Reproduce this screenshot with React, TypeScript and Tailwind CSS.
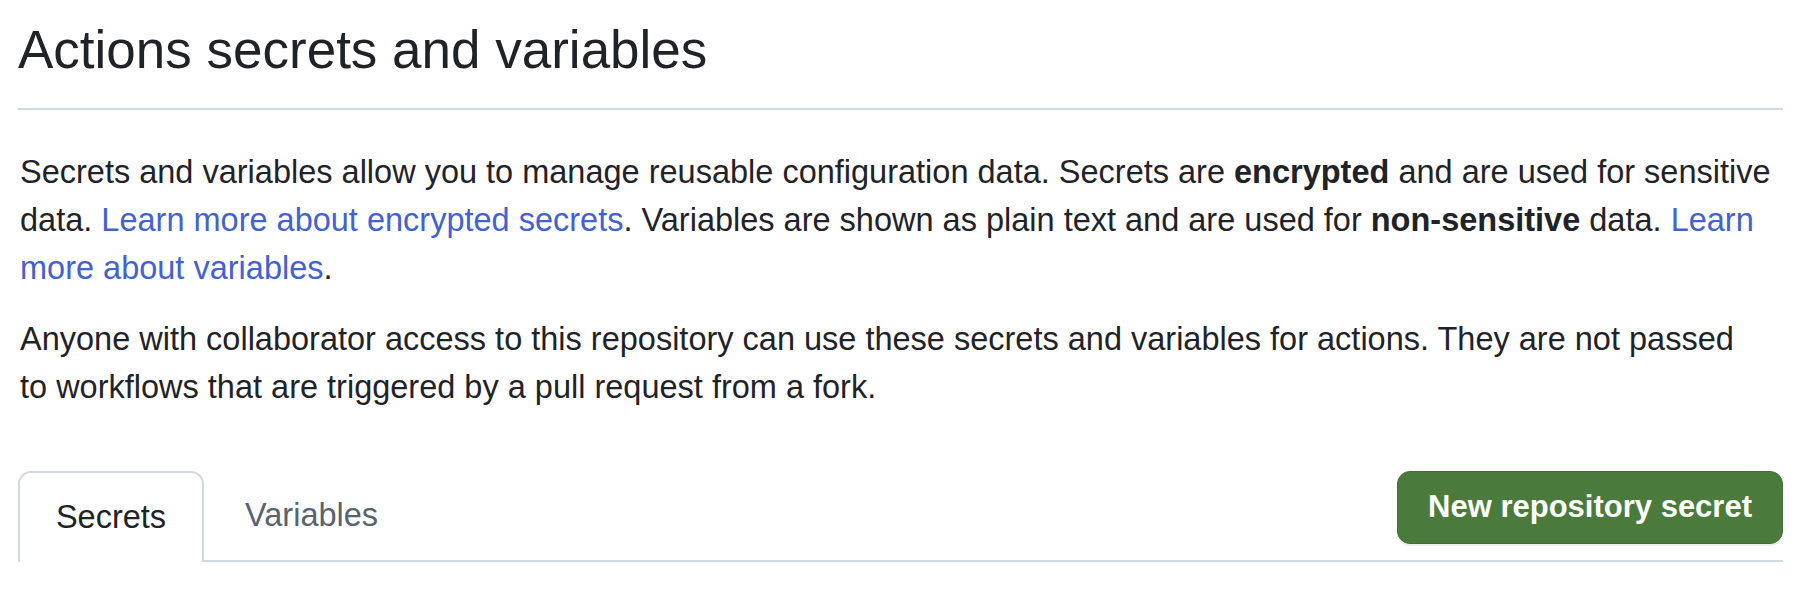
export default function App() {
  const font = { fontFamily: '"Liberation Sans", Arial, sans-serif' };
  return (
    <div className="min-h-screen w-full bg-white pl-[18px] pr-[21px] text-[#1f2328]" style={font}>
      <div className="border-b-2 border-[#d1d9e0] pt-[17px] pb-[25px]">
        <h1 className="text-[53px] leading-[66px] font-normal">Actions secrets and variables</h1>
      </div>
      <p className="mt-[39px] pl-[2px] text-[32.5px] leading-[47.8px] whitespace-nowrap">
        Secrets and variables allow you to manage reusable configuration data. Secrets are{" "}
        <b className="font-bold">encrypted</b> and are used for sensitive
        <br />
        data. <a className="text-[#4361d0]">Learn more about encrypted secrets</a>. Variables are shown as plain
        text and are used for <b className="font-bold">non-sensitive</b> data.{" "}
        <a className="text-[#4361d0]">Learn</a>
        <br />
        <a className="text-[#4361d0]">more about variables</a>.
      </p>
      <p className="mt-[24px] pl-[2px] text-[32.5px] leading-[47.8px] whitespace-nowrap">
        Anyone with collaborator access to this repository can use these secrets and variables for actions. They
        are not passed
        <br />
        to workflows that are triggered by a pull request from a fork.
      </p>
      <div className="mt-[59px] flex items-start">
        <div className="flex flex-1 items-end">
          <div className="flex h-[91px] w-[186px] items-center justify-center rounded-t-[13px] border-2 border-b-0 border-[#d1d9e0] bg-white text-[32.5px] text-[#1f2328]">
            Secrets
          </div>
          <div className="flex h-[91px] flex-1 items-center border-b-2 border-[#d1d9e0] pl-[41px] text-[32.5px] text-[#59636e]">
            Variables
          </div>
        </div>
        <div className="flex h-[91px] items-start border-b-2 border-[#d1d9e0]">
          <button className="flex h-[73px] items-center rounded-[13px] border border-[#3f6d33] bg-[#4a7b3c] px-[30px] text-[31px] font-bold text-white shadow-[0_2px_0_rgba(31,35,40,0.08)]">
            New repository secret
          </button>
        </div>
      </div>
    </div>
  );
}
